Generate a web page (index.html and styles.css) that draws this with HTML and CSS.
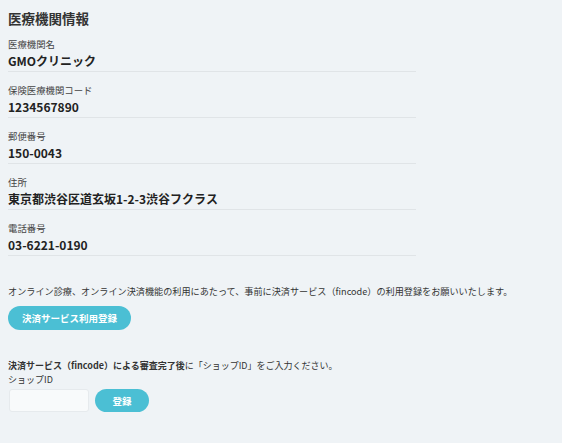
FILE: index.html
```html
<!DOCTYPE html>
<html lang="ja">

<head>
  <meta charset="UTF-8">
  <meta name="viewport" content="width=device-width, initial-scale=1.0">
  <title>医療機関情報</title>
  <link rel="stylesheet" href="styles.css">
</head>

<body>
  <h2>医療機関情報</h2>

  <div class="info-list">
    <div class="info-item">
      <div class="info-label">医療機関名</div>
      <div class="info-value">GMOクリニック</div>
    </div>
    <div class="info-item">
      <div class="info-label">保険医療機関コード</div>
      <div class="info-value">1234567890</div>
    </div>
    <div class="info-item">
      <div class="info-label">郵便番号</div>
      <div class="info-value">150-0043</div>
    </div>
    <div class="info-item">
      <div class="info-label">住所</div>
      <div class="info-value">東京都渋谷区道玄坂1-2-3渋谷フクラス</div>
    </div>
    <div class="info-item">
      <div class="info-label">電話番号</div>
      <div class="info-value">03-6221-0190</div>
    </div>
  </div>

  <div class="payment">
    <p class="notice">オンライン診療、オンライン決済機能の利用にあたって、事前に決済サービス（fincode）の利用登録をお願いいたします。</p>
    <button class="btn" type="button">決済サービス利用登録</button>
  </div>

  <div class="shop">
    <p class="notice"><strong>決済サービス（fincode）による審査完了後</strong>に「ショップID」をご入力ください。</p>
    <label class="shop-label" for="shopId">ショップID</label>
    <div class="shop-form">
      <input type="text" id="shopId">
      <button class="btn btn-small" type="button">登録</button>
    </div>
  </div>
</body>

</html>
```

FILE: styles.css
```css
/* 医療機関情報ページ */
body {
  font-family: "Noto Sans CJK JP", "Noto Sans", sans-serif;
  background-color: #eff3f6;
  color: #333;
  margin: 0;
  padding: 8px;
}

h2 {
  font-size: 13.5px;
  line-height: 20px;
  font-weight: bold;
  margin: 0 0 10px;
}

.info-list {
  width: 408px;
}

.info-item {
  padding-bottom: 1px;
  border-bottom: 1px solid #e0e4e7;
  margin-bottom: 12px;
}

.info-label {
  font-size: 9.4px;
  line-height: 13px;
  color: #444;
}

.info-value {
  font-size: 12px;
  line-height: 19px;
  font-weight: bold;
  color: #222;
}

.payment {
  margin-top: 28px;
}

.payment .notice {
  font-size: 9.15px;
  margin-bottom: 5px;
}

.notice {
  font-size: 9px;
  line-height: 14px;
  margin: 0;
}

.btn {
  background-color: #4bbfd4;
  color: #fff;
  border: none;
  border-radius: 12px;
  height: 24px;
  padding: 0 14px;
  font-family: inherit;
  font-size: 9.5px;
  font-weight: bold;
  cursor: pointer;
}

.shop {
  margin-top: 29px;
}

.shop-label {
  display: block;
  font-size: 9px;
  line-height: 13px;
  margin-bottom: 3px;
}

.shop-form {
  display: flex;
  gap: 6px;
}

.shop-form input {
  width: 80px;
  height: 23px;
  box-sizing: border-box;
  border: 1px solid #e6eaed;
  border-radius: 3px;
  background-color: #f8fafb;
  margin-left: 1px;
}

.btn-small {
  width: 54px;
  height: 23px;
  padding: 0;
}
```
